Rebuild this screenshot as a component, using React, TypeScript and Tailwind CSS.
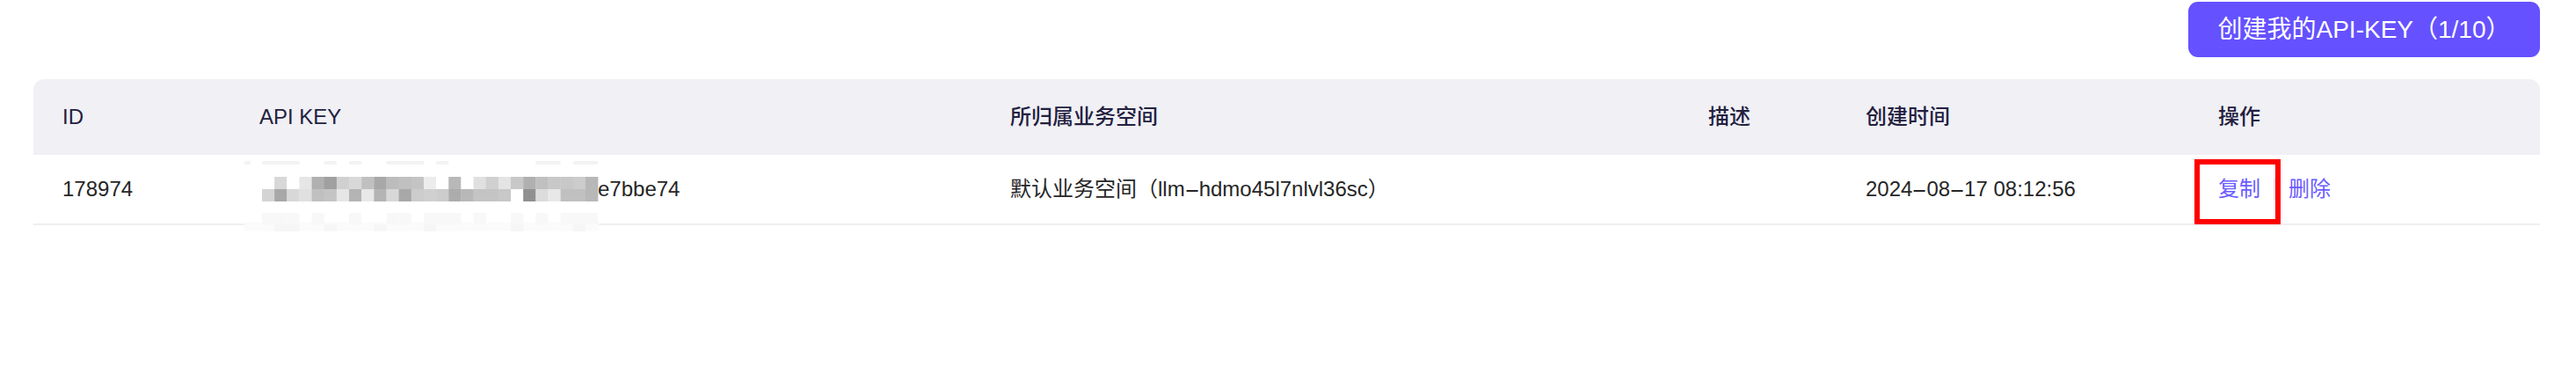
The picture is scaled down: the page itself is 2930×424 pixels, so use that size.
import React from 'react';

const font = { fontFamily: '"Liberation Sans", "Noto Sans CJK SC", sans-serif' };

// mosaic cell greys over the hidden part of the key
const rowA = ['fff', 'd8d8d8', 'fff', 'e6e6e6', 'b0b0b0', 'a0a0a0', 'd0d0d0', 'd8d8d8', 'c0c0c0', 'a8a8a8', 'bcbcbc', 'c0c0c0', 'c4c4c4', 'ececec', 'fff', 'b8b8b8', 'fff', 'e0e0e0', 'd0d0d0', 'e4e4e4', 'c8c8c8', 'b0b0b0', 'c0c0c0', 'c8c8c8', 'c8c8c8', 'cccccc', 'b8b8b8'];
const rowB = ['d4d4d4', 'a8a8a8', 'd8d8d8', 'e0e0e0', 'c0c0c0', 'c4c4c4', 'e6e6e6', 'b4b4b4', 'e8e8e8', 'b4b4b4', 'd8d8d8', 'a8a8a8', 'cccccc', 'd0d0d0', 'cccccc', 'acacac', 'b8b8b8', 'c4c4c4', 'c4c4c4', 'c8c8c8', 'fff', '909090', 'dcdcdc', 'e8e8e8', 'c0c0c0', 'c0c0c0', 'b8b8b8'];
const topFaint = [0, 1, 2, 5, 7, 10, 11, 12, 14, 22, 23, 25, 26];
const bottomFaint = [0, 1, 2, 4, 7, 10, 11, 13, 14, 15, 17, 20, 22, 24, 25, 26];

function Mosaic() {
  const w = 14.15;
  return (
    <svg className="absolute left-[-20px] top-[-18px]" width="405" height="80" viewBox="0 0 405 80">
      <rect x="0" y="70" width="403" height="10" fill="#fbfbfb" />
      <rect x="0" y="0" width="7" height="4" fill="#f4f4f4" />
      {topFaint.map(i => (
        <rect key={'t' + i} x={20 + i * w} y="0" width={w} height="4" fill="#f3f3f3" />
      ))}
      {rowA.map((c, i) => (
        <rect key={'a' + i} x={20 + i * w} y="18" width={w + 0.3} height="14" fill={'#' + c} />
      ))}
      {rowB.map((c, i) => (
        <rect key={'b' + i} x={20 + i * w} y="32" width={w + 0.3} height="14" fill={'#' + c} />
      ))}
      {bottomFaint.map(i => (
        <rect key={'c' + i} x={20 + i * w} y="59" width={w} height="13" fill="#f8f8f8" />
      ))}
      {[1, 2, 5, 9, 13, 20, 25].map(i => (
        <rect key={'d' + i} x={20 + i * w} y="72" width={w} height="8" fill="#f6f6f6" />
      ))}
    </svg>
  );
}

// wide dash like the original font's hyphen
const Dash = () => <span className="inline-block w-[16px] text-center scale-x-[2.2]">-</span>;

const cols = 'grid grid-cols-[224px_854px_794px_179px_401px_399px]';

export default function App() {
  return (
    <div className="w-[2930px] h-[424px] bg-white pl-[38px] pr-[41px] pt-[2px]" style={font}>
      <div className="flex justify-end">
        <button className="w-[400px] h-[63px] rounded-[11px] bg-[#6551ff] text-white text-[28px] flex items-center justify-center">
          创建我的API-KEY（1/10）
        </button>
      </div>

      <div className="mt-[25px]">
        {/* header */}
        <div className={`${cols} h-[86px] items-center bg-[#f0f0f5] rounded-t-[12px] text-[24px] font-medium text-[#23203f]`}>
          <div className="pl-[33px]">ID</div>
          <div className="pl-[33px]">API KEY</div>
          <div className="pl-[33px]">所归属业务空间</div>
          <div className="pl-[33px]">描述</div>
          <div className="pl-[33px]">创建时间</div>
          <div className="pl-[33px]">操作</div>
        </div>

        {/* row */}
        <div className={`${cols} h-[80px] items-center border-b-2 border-[#efeff2] text-[24px] text-[#262626]`}>
          <div className="pl-[33px]">178974</div>
          <div className="pl-[36px] flex items-center">
            <span className="relative w-[382px] h-[28px] shrink-0">
              <Mosaic />
            </span>
            <span>e7bbe74</span>
          </div>
          <div className="pl-[33px]">默认业务空间（llm<Dash />hdmo45l7nlvl36sc）</div>
          <div className="pl-[33px]"></div>
          <div className="pl-[33px]">2024<Dash />08<Dash />17 08:12:56</div>
          <div className="relative self-stretch pl-[33px] flex items-center text-[#6b5bff]">
            <span>复制</span>
            <span className="mx-[15px] w-[2px] h-[24px] bg-[#e6e6ea]" />
            <span>删除</span>
            <div className="absolute left-[6px] top-[5px] w-[98px] h-[74px] border-[6px] border-[#ff0000]" />
          </div>
        </div>
      </div>
    </div>
  );
}
